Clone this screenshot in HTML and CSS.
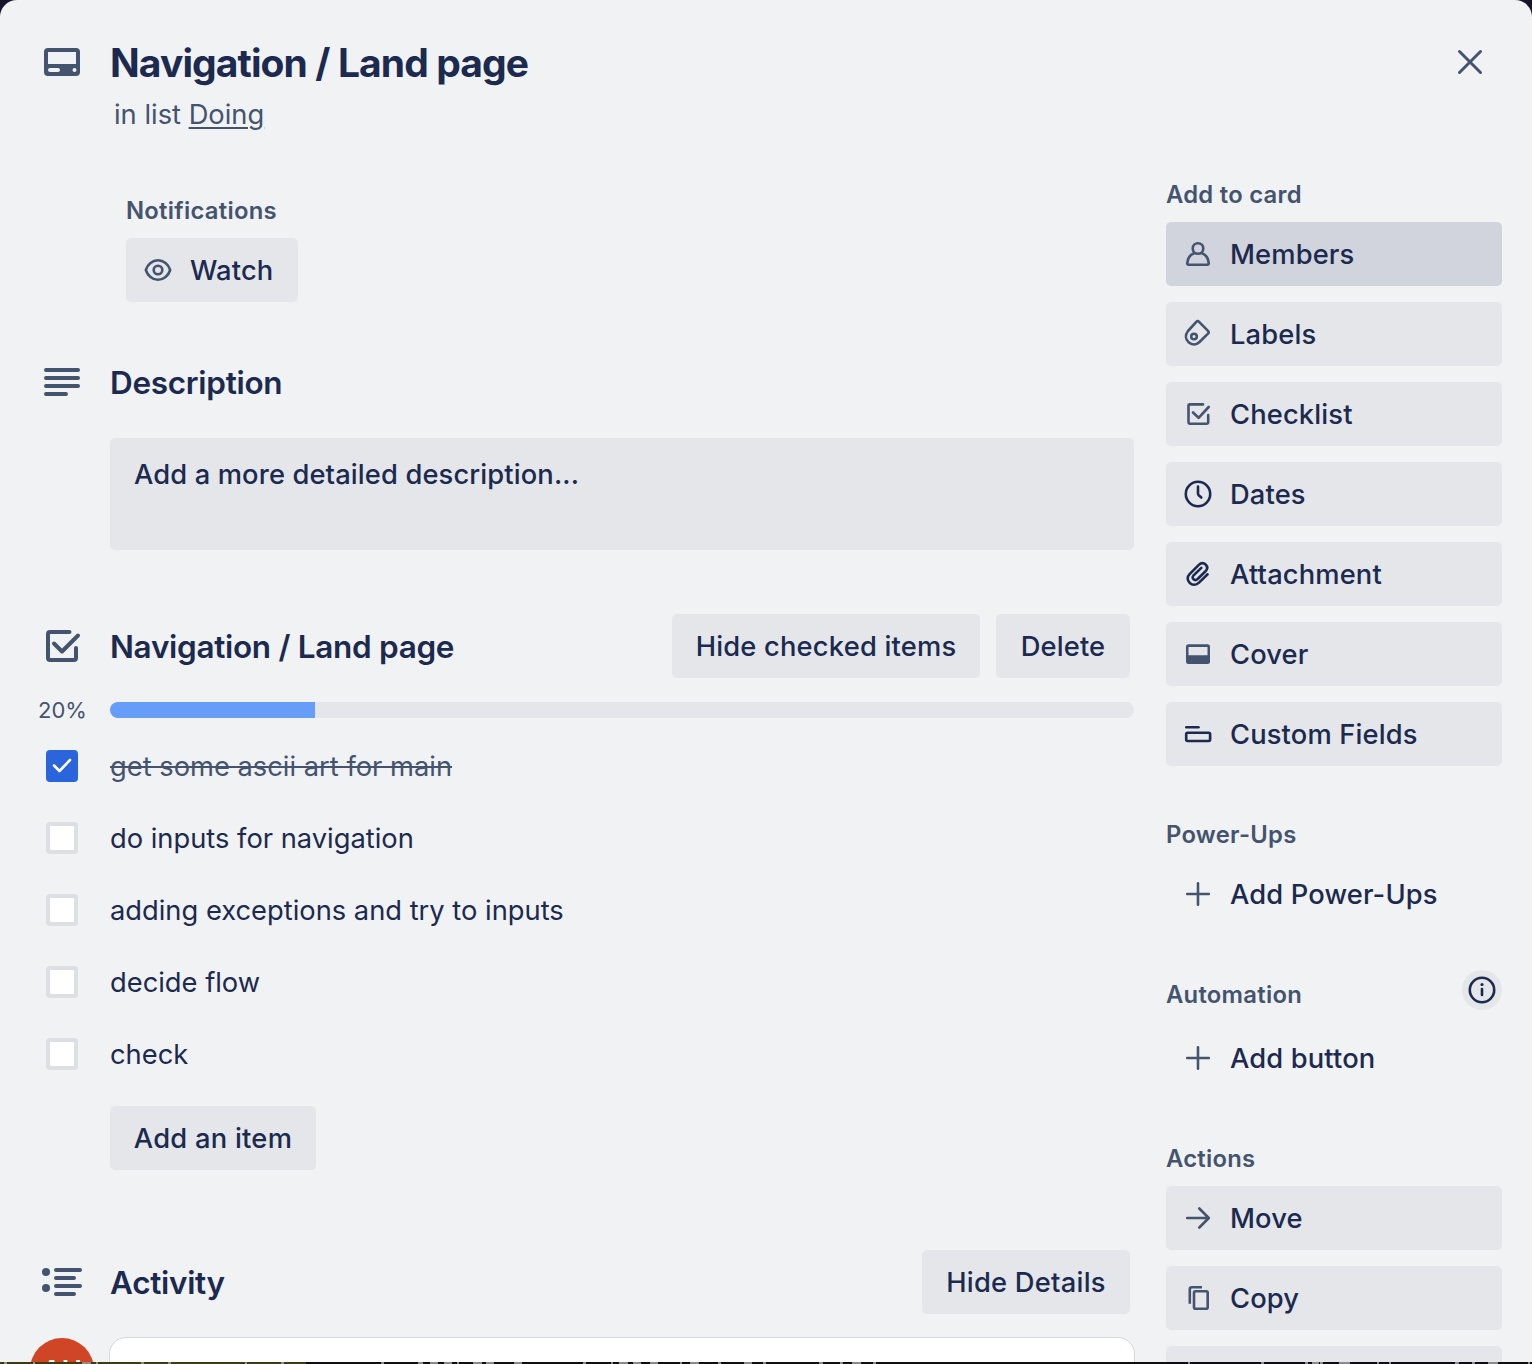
FILE: index.html
```html
<!DOCTYPE html>
<html lang="en">
<head>
<meta charset="utf-8">
<title>Navigation / Land page</title>
<link rel="stylesheet" href="styles.css">
</head>
<body>
<div class="modal">
  <header class="header">
    <div class="row title-row">
      <svg class="icon-lg" viewBox="0 0 48 48"><path fill="currentColor" fill-rule="evenodd" d="M10 10h28a4 4 0 0 1 4 4v20a4 4 0 0 1-4 4H10a4 4 0 0 1-4-4V14a4 4 0 0 1 4-4zm0 4v12h28V14zM12 30a2 2 0 0 0 0 4h8a2 2 0 0 0 0-4zM36.500 30a2 2 0 1 0 0 4a2 2 0 0 0 0-4z"/></svg>
      <h1 class="title">Navigation / Land page</h1>
      <button class="close" aria-label="Close"><svg width="32" height="32" viewBox="0 0 32 32"><path class="line" stroke-width="3" d="M5.500 5.500l21 21M26.500 5.500l-21 21"/></svg></button>
    </div>
    <p class="subtitle">in list <a class="list-link">Doing</a></p>
  </header>
  <div class="columns">
    <main class="main">
      <section class="notifications">
        <h3 class="label">Notifications</h3>
        <button class="btn watch"><svg class="icon" viewBox="0 0 32 32"><path class="line" d="M3.800 16C5.500 10.500 10.500 6.300 16 6.300S26.500 10.500 28.200 16C26.500 21.500 21.500 25.700 16 25.700S5.500 21.500 3.800 16z"/><circle class="line" cx="16" cy="16" r="4.300"/></svg><span>Watch</span></button>
      </section>

      <section class="description">
        <div class="row">
          <svg class="icon-lg" viewBox="0 0 48 48"><path class="line" stroke-width="4" d="M8 12h32M8 20h32M8 28h32M8 36h20"/></svg>
          <h2 class="heading">Description</h2>
        </div>
        <div class="description-box">Add a more detailed description...</div>
      </section>

      <section class="checklist">
        <div class="row head">
          <svg class="icon-lg" viewBox="0 0 48 48"><path class="line" stroke-width="4" d="M31.500 10H12a2 2 0 0 0-2 2v24a2 2 0 0 0 2 2h24a2 2 0 0 0 2-2V26M16 21.500l8 8 16-16"/></svg>
          <h2 class="heading">Navigation / Land page</h2>
          <div class="actions"><button class="btn hide-checked">Hide checked items</button><button class="btn delete">Delete</button></div>
        </div>
        <div class="progress-row"><span class="percent">20%</span><div class="track"><div class="fill" style="width:20%"></div></div></div>
        <ul class="items">
          <li class="item done"><span class="box checked"><svg width="32" height="32" viewBox="0 0 32 32"><path class="line" d="M8 15.500l5.500 5.500 10.500-11"/></svg></span><span class="item-text">get some ascii art for main</span></li>
          <li class="item"><span class="box"></span><span class="item-text">do inputs for navigation</span></li>
          <li class="item"><span class="box"></span><span class="item-text">adding exceptions and try to inputs</span></li>
          <li class="item"><span class="box"></span><span class="item-text">decide flow</span></li>
          <li class="item"><span class="box"></span><span class="item-text">check</span></li>
        </ul>
        <button class="btn add-item">Add an item</button>
      </section>

      <section class="activity">
        <div class="row head">
          <svg class="icon-lg" viewBox="0 0 48 48"><path class="line" stroke-width="4" d="M18 12h24M18 20h18M18 28h24M18 36h18"/><circle cx="8" cy="14" r="4" fill="currentColor"/><circle cx="8" cy="30" r="4" fill="currentColor"/></svg>
          <h2 class="heading">Activity</h2>
          <div class="actions"><button class="btn hide-details">Hide Details</button></div>
        </div>
        <div class="comment"><span class="avatar">AH</span><div class="comment-box"></div></div>
      </section>
    </main>

    <aside class="sidebar">
      <section class="group">
        <h3 class="label">Add to card</h3>
        <div class="stack">
          <button class="btn side active"><svg class="icon" viewBox="0 0 32 32"><circle class="line" cx="16" cy="10.500" r="5.300"/><path class="line" d="M12 15.200C8.500 16.600 5.700 19.700 5.300 25.200Q5.200 26.700 6.700 26.700H25.300Q26.800 26.700 26.700 25.200C26.300 19.700 23.500 16.600 20 15.200"/></svg><span>Members</span></button>
          <button class="btn side"><svg class="icon" viewBox="0 0 32 32"><path class="line" d="M14.300 3.900Q15.700 2.500 17.100 3.900L26 12.800Q27.400 14.200 26 15.600L17.500 24C14.200 27.200 9.800 27.200 6.600 24.300C3.400 21.300 3 16.800 6 13z"/><circle class="line" cx="12" cy="18.500" r="2.800"/></svg><span>Labels</span></button>
          <button class="btn side"><svg class="icon" viewBox="0 0 32 32"><path class="line" d="M21 6.400H8a1.500 1.500 0 0 0-1.500 1.500v16.300a1.500 1.500 0 0 0 1.500 1.500h16.700a1.500 1.500 0 0 0 1.500-1.500V17M11 14.500l5.600 5.300L26.700 9"/></svg><span>Checklist</span></button>
          <button class="btn side"><svg class="icon dark" viewBox="0 0 32 32"><circle class="line" cx="16" cy="16" r="12.200"/><path class="line" d="M16 8.500V15.500Q16 16.500 16.700 17.200L19.300 19.500"/></svg><span>Dates</span></button>
          <button class="btn side"><svg class="icon dark" viewBox="0 0 32 32"><path class="line" d="M25.600 16.300L17 24.600C14 27.400 10.300 27.300 7.800 25C5 22.500 4.900 18.800 7.800 15.900L16.800 6.900C19 4.800 21.700 4.800 23.600 6.500C25.600 8.500 25.500 11.200 23.500 13.300L15.600 21C14.200 22.300 12.700 22.300 11.500 21.300C10.300 20.100 10.300 18.600 11.600 17.300L19.300 9.900"/></svg><span>Attachment</span></button>
          <button class="btn side"><svg class="icon" viewBox="0 0 32 32"><path fill="currentColor" fill-rule="evenodd" d="M6.500 6.300h19a2.500 2.500 0 0 1 2.500 2.500v14.700a2.500 2.500 0 0 1-2.500 2.500h-19A2.500 2.500 0 0 1 4 23.500V8.800a2.500 2.500 0 0 1 2.500-2.500zm0 2.700v8.300h19V9z"/></svg><span>Cover</span></button>
          <button class="btn side"><svg class="icon dark" viewBox="0 0 32 32"><path class="line" d="M4.300 9.300h12.200"/><rect class="line" x="4.200" y="14.700" width="23.900" height="8.300" rx="1.500"/></svg><span>Custom Fields</span></button>
        </div>
      </section>
      <section class="group">
        <h3 class="label">Power-Ups</h3>
        <button class="btn side plain"><svg class="icon" viewBox="0 0 32 32"><path class="line" d="M16 5.200v21.600M5.200 16h21.600"/></svg><span>Add Power-Ups</span></button>
      </section>
      <section class="group automation">
        <div class="label-row"><h3 class="label">Automation</h3>
          <span class="info"><svg width="40" height="40" viewBox="0 0 40 40"><circle class="line" cx="20" cy="20" r="12.200"/><path class="line" d="M20 19v6"/><circle cx="20" cy="14.500" r="1.600" fill="currentColor"/></svg></span></div>
        <button class="btn side plain"><svg class="icon" viewBox="0 0 32 32"><path class="line" d="M16 5.200v21.600M5.200 16h21.600"/></svg><span>Add button</span></button>
      </section>
      <section class="group">
        <h3 class="label">Actions</h3>
        <div class="stack">
          <button class="btn side"><svg class="icon" viewBox="0 0 32 32"><path class="line" d="M5.200 16H26.500M17.300 6.500L26.800 16l-9.500 9.500"/></svg><span>Move</span></button>
          <button class="btn side"><svg class="icon" viewBox="0 0 32 32"><path class="line butt" d="M20 5.300H9.800a2 2 0 0 0-2 2V21.700"/><rect class="line" x="12" y="9.300" width="13.700" height="17.400" rx="1.500"/></svg><span>Copy</span></button>
          <button class="btn side"></button>
        </div>
      </section>
    </aside>
  </div>
</div>
<svg class="backdrop-strip" viewBox="0 0 1532 2">
  <path fill="#0e0e10" d="M0 0h1532v2H0z"/>
  <path fill="#403a12" d="M0 0h306v2H0z"/>
  <path stroke="#8b8b8b" d="M4 1h3M33 1h2M82 1h9M96 1h2M141 1h3M168 1h3M245 1h2M281 1h3M381 1h3M418 1h5M430 1h8M444 1h8M457 1h2M473 1h9M486 1h8M514 1h8M583 1h3M611 1h2M619 1h9M633 1h8M650 1h8M680 1h2M690 1h9M718 1h3M744 1h8M763 1h3M819 1h4M840 1h3M852 1h9M873 1h3M1188 1h2M1261 1h3M1305 1h3M1312 1h7M1320 1h3M1339 1h11M1377 1h2M1389 1h2M1455 1h4M1472 1h3M1488 1h10M1528 1h2"/>
</svg>
</body>
</html>
```

FILE: styles.css
```css
* { box-sizing: border-box; }

body {
  margin: 0;
  width: 1532px;
  height: 1364px;
  overflow: hidden;
  background: #17152a;
  color: #1b2a4e;
  font-family: Inter, "Liberation Sans", sans-serif;
  font-size: 27.300px;
}

h1, h2, h3, p, ul { margin: 0; padding: 0; }

button {
  border: 0;
  padding: 0;
  background: none;
  color: inherit;
  font: inherit;
}

svg { display: block; flex: none; stroke-width: 2.600; }

.line {
  fill: none;
  stroke: currentColor;
  stroke-linecap: round;
  stroke-linejoin: round;
}
.line.butt { stroke-linecap: butt; }

.modal {
  width: 1532px;
  height: 1362px;
  overflow: hidden;
  background: #f1f2f4;
  border-radius: 17px 17px 0 0;
}

.header { height: 130px; padding-top: 38px; }

.row {
  display: grid;
  grid-template-columns: 48px 1fr auto;
  column-gap: 24px;
  align-items: center;
  padding-left: 38px;
  height: 48px;
}

.icon-lg { width: 48px; height: 48px; color: #44546f; }

.title {
  padding-top: 2px;
  font-size: 39px;
  line-height: 46px;
  font-weight: 650;
  letter-spacing: -0.900px;
}

.close { margin-right: 46px; color: #44546f; }

.subtitle {
  padding-left: 114px;
  margin-top: 13px;
  line-height: 32px;
  color: #44546f;
}

.list-link {
  text-decoration: underline;
  text-decoration-thickness: 2px;
  text-underline-offset: 3px;
}

.columns {
  display: grid;
  grid-template-columns: 1134px 336px;
  column-gap: 32px;
}

.label {
  color: #44546f;
  font-size: 23.800px;
  font-weight: 600;
  line-height: 30px;
  letter-spacing: 0.270px;
}

.btn {
  display: flex;
  align-items: center;
  justify-content: center;
  height: 64px;
  border-radius: 5px;
  background: #e4e6ea;
  font-weight: 500;
  letter-spacing: 0.150px;
  white-space: nowrap;
}

.icon { width: 32px; height: 32px; color: #44546f; }
.icon.dark { color: #1b2a4e; }

.notifications { padding: 66px 0 0 126px; }
.watch {
  width: 172px;
  margin-top: 12px;
  padding-left: 16px;
  justify-content: flex-start;
  gap: 16px;
}

.description { margin-top: 56px; }

.heading {
  font-size: 31.500px;
  line-height: 40px;
  font-weight: 620;
  padding-top: 1px;
  letter-spacing: -0.300px;
}

.description-box {
  height: 112px;
  margin: 32px 0 0 110px;
  padding: 21px 24px;
  border-radius: 5px;
  background: #e4e6ea;
  line-height: 32px;
  font-weight: 500;
  letter-spacing: 0.130px;
}

.checklist { margin-top: 64px; }
.row.head { height: 64px; padding-right: 4px; }
.actions { display: flex; gap: 16px; }
.hide-checked { width: 308px; letter-spacing: 0.200px; }
.delete { width: 134px; }
.hide-details { width: 208px; letter-spacing: 0.250px; }

.progress-row {
  display: grid;
  grid-template-columns: 72px 1024px;
  align-items: center;
  height: 16px;
  margin: 24px 0 0 38px;
}
.percent { font-size: 22px; line-height: 16px; color: #44546f; }
.track { height: 16px; border-radius: 8px; background: #e4e6ea; overflow: hidden; }
.fill { height: 16px; background: #669df8; }

.items { list-style: none; padding-top: 12px; }
.item {
  display: flex;
  align-items: center;
  gap: 32px;
  height: 72px;
  padding-left: 46px;
}
.item.done .item-text {
  color: #44546f;
  text-decoration: line-through;
  text-decoration-thickness: 2px;
}
.box {
  width: 32px;
  height: 32px;
  border: 4px solid #dddfe5;
  border-radius: 4px;
  background: #fff;
}
.box.checked { border: 0; background: #2a65dc; color: #fff; }
.add-item { width: 206px; margin: 16px 0 0 110px; letter-spacing: 0.250px; }

.activity { margin-top: 80px; }
.comment { display: flex; gap: 15px; padding: 23px 0 0 30px; }
.avatar {
  flex: none;
  width: 64px;
  height: 64px;
  margin-top: 1px;
  border-radius: 50%;
  background: #cf4525;
  color: #fff;
  font-size: 27px;
  font-weight: 600;
  line-height: 65px;
  text-align: center;
}
.comment-box {
  flex: none;
  width: 1026px;
  height: 90px;
  border: 1px solid #d5d8e0;
  border-radius: 17px;
  background: #fff;
}

.sidebar { padding-top: 37px; }
.group { margin-bottom: 41px; }
.sidebar .label { height: 55px; line-height: 55px; }
.label-row { display: flex; justify-content: space-between; }
.info {
  width: 40px;
  height: 40px;
  margin-top: 3px;
  border-radius: 50%;
  background: #e4e6ea;
}
.automation .side { margin-top: 4px; }
.stack { display: grid; gap: 16px; }
.side {
  width: 336px;
  justify-content: flex-start;
  gap: 16px;
  padding-left: 16px;
}
.side.active { background: #d1d4dc; }
.side.plain { background: transparent; }

/* Sliver of the page behind the dialog */
.backdrop-strip { width: 1532px; height: 2px; }
```
